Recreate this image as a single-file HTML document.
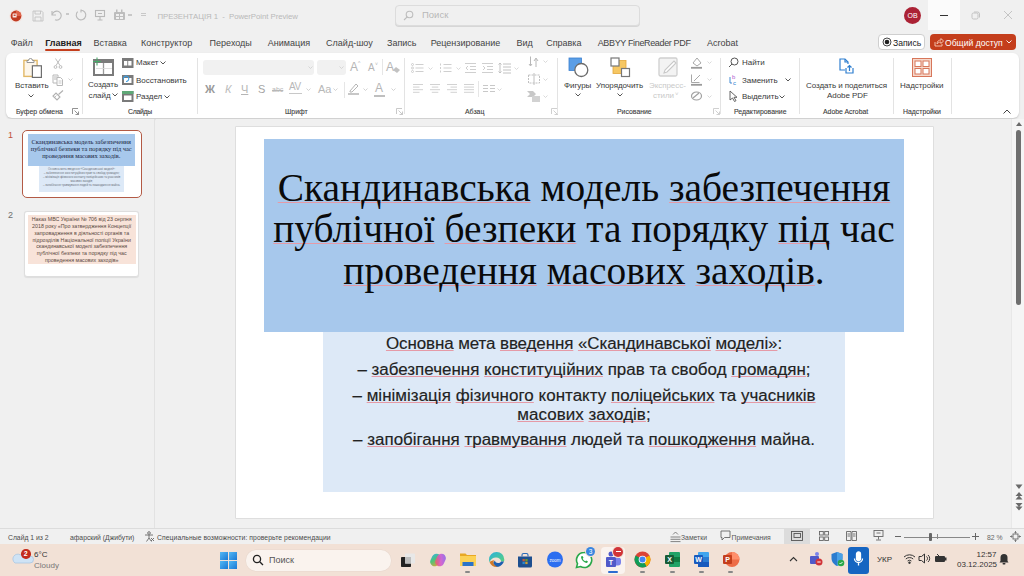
<!DOCTYPE html>
<html><head><meta charset="utf-8">
<style>
*{margin:0;padding:0;box-sizing:border-box}
html,body{width:1024px;height:576px;overflow:hidden;background:#f0f0f0;font-family:"Liberation Sans",sans-serif;color:#333}
.a{position:absolute;white-space:nowrap}
#titlebar{position:absolute;left:0;top:0;width:1024px;height:31px;background:#f0f0f0}
#ribbon{position:absolute;left:5.5px;top:52.5px;width:1013px;height:65.3px;background:#fff;border-radius:6px;box-shadow:0 1px 2px rgba(0,0,0,.18)}
#panel{position:absolute;left:0;top:119px;width:155px;height:409px;background:#f0f0f0;border-right:1px solid #e2e2e2}
#canvas{position:absolute;left:156px;top:119px;width:856px;height:409px;background:#f0f0f0}
#slide{position:absolute;left:236px;top:126.5px;width:697px;height:391.7px;background:#fff;box-shadow:0 0 0 0.6px rgba(0,0,0,.13)}
#tbox{position:absolute;left:264px;top:139px;width:640px;height:193px;background:#a7c8ec}
#bbox{position:absolute;left:323px;top:332px;width:522px;height:160px;background:#dde9f7}
#status{position:absolute;left:0;top:528px;width:1024px;height:16px;background:#f0f0f0;border-top:1px solid #dcdcdc}
#taskbar{position:absolute;left:0;top:544px;width:1024px;height:32px;background:#f2e1d6}
.title .sp{text-underline-offset:0.5px;text-decoration-skip-ink:none}
.title{font-family:"Liberation Serif",serif;font-size:39.4px;color:#0a0a0a;text-align:center;position:absolute;left:264px;width:640px;line-height:41.75px}
.body{font-size:16px;transform:scaleX(1.06);color:#222;-webkit-text-stroke:0.15px #222;text-align:center;position:absolute;left:323px;width:522px}
.sp{text-decoration:underline;text-decoration-skip-ink:none;text-decoration-color:#e59aa6;text-underline-offset:1px;text-decoration-thickness:1px}
.tab{position:absolute;top:37.8px;font-size:9px;color:#444;white-space:nowrap}
.rl{position:absolute;font-size:8px;letter-spacing:-0.05px;color:#3a3a3a;white-space:nowrap}
.gl{position:absolute;top:108px;font-size:6.9px;color:#3a3a3a;-webkit-text-stroke:0.1px #3a3a3a;white-space:nowrap}
.sep{position:absolute;top:58px;width:1px;height:56px;background:#e3e3e3}
</style></head><body>
<div id="titlebar">
<svg class="a" style="left:9px;top:9px" width="14" height="14" viewBox="0 0 14 14"><circle cx="7" cy="7" r="6.6" fill="#f6dcd4" opacity=".6"/><circle cx="7" cy="7" r="5.4" fill="#c13b22"/><path d="M7 1.6A5.4 5.4 0 0 1 12.4 7H7z" fill="#e0644a"/><rect x="3.6" y="4.6" width="4" height="4" rx="0.5" fill="#fff" opacity=".9"/><rect x="4.6" y="5.6" width="2" height="1.3" fill="#c13b22"/></svg>
<svg class="a" style="left:32px;top:9.5px" width="12" height="12" viewBox="0 0 12 12" fill="none" stroke="#c2c2c2" stroke-width="0.9"><path d="M1 1h8.5L11 2.5V11H1z"/><path d="M3 1v3h5.5V1M3 11V7h6v4"/></svg>
<svg class="a" style="left:50px;top:9px" width="12" height="12" viewBox="0 0 12 12" fill="none" stroke="#b9b9b9" stroke-width="1.1"><path d="M2 2v4h4"/><path d="M2.3 5.5A4.5 4.5 0 1 1 5 10.8"/></svg>
<div class="a" style="left:66px;top:13px;width:3px;height:2px;background:#c8c8c8"></div>
<svg class="a" style="left:75px;top:9px" width="12" height="12" viewBox="0 0 12 12" fill="none" stroke="#b9b9b9" stroke-width="1.1"><path d="M6 1.2A4.8 4.8 0 1 1 2.6 2.6"/><path d="M6 0.5v3"/></svg>
<svg class="a" style="left:94px;top:9px" width="12" height="12" viewBox="0 0 12 12" fill="none" stroke="#b9b9b9" stroke-width="1.1"><rect x="1.5" y="1.5" width="9" height="6"/><path d="M6 7.5v3M3.5 11h5M4 4.5h4"/></svg>
<svg class="a" style="left:113px;top:9px" width="13" height="12" viewBox="0 0 13 12" fill="#bdbdbd"><rect x="1" y="3" width="11" height="8" rx="1"/><rect x="3" y="0.5" width="1.5" height="3"/><rect x="8" y="0.5" width="1.5" height="3"/><rect x="3" y="5" width="3" height="2" fill="#f0f0f0"/><rect x="7" y="5" width="3" height="2" fill="#f0f0f0"/><rect x="3" y="8" width="3" height="2" fill="#f0f0f0"/><rect x="7" y="8" width="3" height="2" fill="#f0f0f0"/></svg>
<div class="a" style="left:128px;top:14px;width:4px;height:2px;background:#c8c8c8"></div>
<div class="a" style="left:141px;top:13px;width:5px;height:1px;background:#c8c8c8;box-shadow:0 2px 0 #c8c8c8"></div>
<div class="a" style="left:157.5px;top:12px;font-size:7.8px;color:#b9b9b9;letter-spacing:-0.05px">ПРЕЗЕНТАЦІЯ 1 &nbsp;-&nbsp; PowerPoint Preview</div>
<div class="a" style="left:395px;top:5px;width:245px;height:21px;border:1px solid #dcdcdc;border-radius:4px;background:#f0f0f0;box-shadow:0 1px 0 #d6d6d6"></div>
<svg class="a" style="left:403px;top:10px" width="11" height="11" viewBox="0 0 11 11" fill="none" stroke="#bdbdbd" stroke-width="1.1"><circle cx="6.5" cy="4.5" r="3.3"/><path d="M4.2 6.8L1 10"/></svg>
<div class="a" style="left:422px;top:9.2px;font-size:9.5px;color:#b8b8b8">Поиск</div>
<div class="a" style="left:904px;top:7px;width:17px;height:17px;border-radius:50%;background:#ab2235;color:#fff;font-size:7px;text-align:center;line-height:17px">ОВ</div>
<div class="a" style="left:928px;top:0;width:32px;height:30px;background:#fbfbfb"></div>
<div class="a" style="left:940px;top:15px;width:8px;height:1px;background:#333"></div>
<svg class="a" style="left:971px;top:11px" width="9" height="9" viewBox="0 0 9 9" fill="none" stroke="#c4c4c4" stroke-width="1"><rect x="1" y="2" width="6" height="6" rx="1.5"/><path d="M3 1h3.5a2 2 0 0 1 2 2v3.5"/></svg>
<svg class="a" style="left:1003px;top:10px" width="10" height="10" viewBox="0 0 10 10" fill="none" stroke="#c4c4c4" stroke-width="1"><path d="M1 1l8 8M9 1l-8 8"/></svg>
</div>
<div class="tab" data-w="20.3" style="left:10.7px;">Файл</div>
<div class="tab" data-w="34.8" style="left:45.2px;font-weight:bold;color:#222">Главная</div>
<div class="tab" data-w="31.5" style="left:93.4px;">Вставка</div>
<div class="tab" data-w="52.4" style="left:141.0px;">Конструктор</div>
<div class="tab" data-w="41.7" style="left:209.6px;">Переходы</div>
<div class="tab" data-w="42.6" style="left:267.8px;">Анимация</div>
<div class="tab" data-w="46.9" style="left:326.1px;">Слайд-шоу</div>
<div class="tab" data-w="29.2" style="left:387.0px;">Запись</div>
<div class="tab" data-w="70.6" style="left:430.7px;">Рецензирование</div>
<div class="tab" data-w="15.2" style="left:516.5px;">Вид</div>
<div class="tab" data-w="34.5" style="left:546.2px;">Справка</div>
<div class="tab" data-w="92.1" style="left:597.7px;"><span style="letter-spacing:-0.35px">ABBYY FineReader PDF</span></div>
<div class="tab" data-w="31.1" style="left:706.9px;">Acrobat</div>
<div class="a" style="left:45px;top:48.6px;width:35px;height:2px;border-radius:1px;background:#c43e1c"></div>
<div class="a" style="left:878px;top:34px;width:47px;height:16px;border:1px solid #cfcfcf;border-radius:4px;background:#fff"></div>
<svg class="a" style="left:882px;top:37px" width="10" height="10" viewBox="0 0 10 10"><circle cx="5" cy="5" r="4" fill="none" stroke="#333" stroke-width="0.9"/><circle cx="5" cy="5" r="2.3" fill="#222"/></svg>
<div class="a" style="left:893px;top:37.5px;font-size:8.6px;color:#222">Запись</div>
<div class="a" style="left:930px;top:34px;width:86px;height:16px;border-radius:4px;background:#c43e1c"></div>
<svg class="a" style="left:934px;top:37px" width="10" height="10" viewBox="0 0 10 10" fill="none" stroke="#f7c9b8" stroke-width="0.9"><path d="M1 5v4h7V7"/><path d="M3 7c0-3 2-4 4-4V1.5L9.5 4 7 6.5V5C5 5 4 5.8 3 7z"/></svg>
<div class="a" style="left:945px;top:37.5px;font-size:8.6px;color:#fff">Общий доступ</div>
<svg class="a" style="left:1006px;top:40px" width="6" height="4" viewBox="0 0 6 4" fill="none" stroke="#fff" stroke-width="0.9"><path d="M0.5 0.5L3 3l2.5-2.5"/></svg>

<div id="ribbon"></div>
<!-- Clipboard -->
<svg class="a" style="left:22px;top:57px" width="21" height="22" viewBox="0 0 21 22" fill="none"><rect x="1.9" y="3.4" width="13.2" height="16" fill="#fdf6ea" stroke="#e2b866" stroke-width="1.4"/><path d="M5 5.5V3.5h1.5a2 2 0 0 1 4 0H12v2z" fill="#fff" stroke="#8a8a8a" stroke-width="0.9"/><rect x="10.4" y="8.8" width="9" height="11.6" fill="#fff" stroke="#6e6e6e" stroke-width="1.2"/></svg>
<div class="rl" style="left:15px;top:81px">Вставить</div>
<svg class="a" style="left:28px;top:94px" width="6" height="4" viewBox="0 0 6 4" fill="none" stroke="#555" stroke-width="1"><path d="M0.5 0.5L3 3l2.5-2.5"/></svg>
<svg class="a" style="left:53px;top:57.5px" width="10" height="11" viewBox="0 0 10 11" fill="none" stroke="#b5b5b5" stroke-width="0.9"><path d="M2.5 0.5l4.5 7M7.5 0.5L3 7.5"/><circle cx="2.5" cy="9" r="1.4"/><circle cx="7.5" cy="9" r="1.4"/></svg>
<svg class="a" style="left:52px;top:73.5px" width="12" height="12" viewBox="0 0 12 12" fill="none" stroke="#b8b8b8" stroke-width="1"><path d="M1 1h5v8H1z"/><path d="M2 3h3M2 5h3"/><path d="M5 3.5h3.5l2 2v6H5z" fill="#fff"/><path d="M6.5 7h3M6.5 9h3" stroke="#c8c8c8"/></svg>
<svg class="a" style="left:68px;top:78px" width="5" height="3" viewBox="0 0 5 3" fill="none" stroke="#c8c8c8" stroke-width="0.9"><path d="M0.5 0.5L2.5 2.5 4.5 0.5"/></svg>
<svg class="a" style="left:52px;top:90px" width="12" height="11" viewBox="0 0 12 11" fill="none" stroke="#b0b0b0" stroke-width="1.1"><path d="M1 6l4 4 3-3-4-4z"/><path d="M6.5 4.5L11 0.5"/><path d="M2.5 7.5l2-2" stroke-width="0.8"/></svg>
<div class="gl" style="left:16px">Буфер обмена</div>
<svg class="a" style="left:72px;top:108px" width="7" height="7" viewBox="0 0 7 7" fill="none" stroke="#777" stroke-width="0.8"><path d="M0.5 6V0.5H6"/><path d="M2.5 2.5l4 4M6.5 3.5v3h-3"/></svg>
<div class="sep" style="left:82px"></div>
<!-- Slides -->
<svg class="a" style="left:92px;top:57px" width="22" height="19" viewBox="0 0 22 19" fill="none"><rect x="2" y="3" width="19" height="15" fill="#fff" stroke="#7b7b7b" stroke-width="2"/><rect x="2" y="3" width="19" height="3" fill="#7b7b7b"/><path d="M11.5 6v11" stroke="#9a9a9a" stroke-width="1.3"/><path d="M4 11.5h16" stroke="#d8d8d8" stroke-width="0.8"/><path d="M5 0.5v8M1 4.5h8" stroke="#4aa86a" stroke-width="1.1"/></svg>
<div class="rl" style="left:88px;top:80px">Создать</div>
<div class="rl" style="left:88.5px;top:90.5px">слайд</div>
<svg class="a" style="left:111.5px;top:93px" width="6" height="4" viewBox="0 0 6 4" fill="none" stroke="#555" stroke-width="1"><path d="M0.5 0.5L3 3l2.5-2.5"/></svg>
<svg class="a" style="left:122px;top:57.5px" width="11.5" height="10" viewBox="0 0 11.5 10"><rect x="0" y="0" width="11.5" height="10" fill="#7a7a7a"/><rect x="2" y="3" width="3.3" height="4.5" fill="#fff"/><rect x="6.2" y="3" width="3.3" height="4.5" fill="#fff"/></svg>
<div class="rl" style="left:136px;top:57.5px">Макет</div>
<svg class="a" style="left:160px;top:61px" width="6" height="4" viewBox="0 0 6 4" fill="none" stroke="#555" stroke-width="1"><path d="M0.5 0.5L3 3l2.5-2.5"/></svg>
<svg class="a" style="left:122px;top:74.5px" width="11.5" height="10" viewBox="0 0 11.5 10"><rect x="0" y="0" width="11.5" height="10" fill="#7a7a7a"/><rect x="2" y="3" width="7.5" height="5" fill="#fff"/><path d="M1.5 4.5a2.7 2.7 0 1 1 2.5 2" fill="none" stroke="#3a9ce0" stroke-width="1.1"/></svg>
<div class="rl" style="left:136px;top:75.5px">Восстановить</div>
<svg class="a" style="left:122px;top:91px" width="11.5" height="11" viewBox="0 0 11.5 11"><rect x="0" y="0" width="11.5" height="11" fill="#7a7a7a"/><rect x="0" y="0" width="11.5" height="3" fill="#5fa877"/><rect x="2" y="4.5" width="7.5" height="4.5" fill="#fff"/></svg>
<div class="rl" style="left:136px;top:92px">Раздел</div>
<svg class="a" style="left:163.5px;top:95px" width="6" height="4" viewBox="0 0 6 4" fill="none" stroke="#555" stroke-width="1"><path d="M0.5 0.5L3 3l2.5-2.5"/></svg>
<div class="gl" style="left:128px;letter-spacing:-0.3px">Слайды</div>
<div class="sep" style="left:197px"></div>
<!-- Font -->
<div class="a" style="left:203px;top:60px;width:111px;height:15px;border-radius:3px;background:#f1f1f1"></div>
<div class="a" style="left:317px;top:60px;width:29px;height:15px;border-radius:3px;background:#f1f1f1"></div>
<svg class="a" style="left:308px;top:66px" width="5" height="3" viewBox="0 0 5 3" fill="none" stroke="#cfcfcf" stroke-width="0.8"><path d="M0.5 0.5L2.5 2.5 4.5 0.5"/></svg>
<svg class="a" style="left:339px;top:66px" width="5" height="3" viewBox="0 0 5 3" fill="none" stroke="#cfcfcf" stroke-width="0.8"><path d="M0.5 0.5L2.5 2.5 4.5 0.5"/></svg>
<div class="a" style="left:350px;top:60px;font-size:12px;color:#b5b5b5">A</div><div class="a" style="left:358px;top:60px;font-size:5px;color:#b5b5b5">^</div>
<div class="a" style="left:368px;top:62px;font-size:10px;color:#b5b5b5">A</div><div class="a" style="left:375px;top:61px;font-size:5px;color:#b5b5b5">˅</div>
<div class="a" style="left:382px;top:59px;width:1px;height:16px;background:#e6e6e6"></div>
<div class="a" style="left:386px;top:60px;font-size:12px;color:#b5b5b5">A</div><svg class="a" style="left:393px;top:67px" width="7" height="6" viewBox="0 0 7 6" fill="#c2c2c2"><path d="M3 0l4 3-3 3-4-3z"/></svg>
<div class="a" style="left:205px;top:83px;font-size:11px;font-weight:bold;color:#9a9a9a">Ж</div>
<div class="a" style="left:225px;top:83px;font-size:11px;font-style:italic;color:#bdbdbd">К</div>
<div class="a" style="left:241px;top:83px;font-size:11px;color:#b5b5b5;text-decoration:underline">Ч</div>
<div class="a" style="left:258px;top:83px;font-size:11px;color:#a5a5a5">S</div>
<div class="a" style="left:272px;top:86px;font-size:7px;color:#b8b8b8;text-decoration:line-through">abc</div>
<div class="a" style="left:289px;top:81px;font-size:10px;color:#b8b8b8;letter-spacing:-0.5px">AV</div><div class="a" style="left:289px;top:93px;width:13px;height:1px;background:#c8c8c8"></div>
<svg class="a" style="left:306px;top:88px" width="5" height="3" viewBox="0 0 5 3" fill="none" stroke="#c8c8c8" stroke-width="0.8"><path d="M0.5 0.5L2.5 2.5 4.5 0.5"/></svg>
<div class="a" style="left:318px;top:83px;font-size:11px;color:#b8b8b8">Aa</div>
<svg class="a" style="left:333px;top:88px" width="5" height="3" viewBox="0 0 5 3" fill="none" stroke="#c8c8c8" stroke-width="0.8"><path d="M0.5 0.5L2.5 2.5 4.5 0.5"/></svg>
<div class="a" style="left:344px;top:82px;width:1px;height:16px;background:#e6e6e6"></div>
<svg class="a" style="left:347px;top:82px" width="13" height="13" viewBox="0 0 13 13" fill="none" stroke="#b5b5b5" stroke-width="1"><path d="M3 9l6-7 2 2-6 6H3z"/><path d="M1 12h11" stroke-width="1.5"/></svg>
<svg class="a" style="left:363px;top:88px" width="5" height="3" viewBox="0 0 5 3" fill="none" stroke="#c8c8c8" stroke-width="0.8"><path d="M0.5 0.5L2.5 2.5 4.5 0.5"/></svg>
<div class="a" style="left:375px;top:81px;font-size:12px;color:#b5b5b5">A</div><div class="a" style="left:374px;top:95px;width:11px;height:1.5px;background:#bfbfbf"></div>
<svg class="a" style="left:391px;top:88px" width="5" height="3" viewBox="0 0 5 3" fill="none" stroke="#c8c8c8" stroke-width="0.8"><path d="M0.5 0.5L2.5 2.5 4.5 0.5"/></svg>
<div class="gl" style="left:285px">Шрифт</div>
<svg class="a" style="left:396px;top:108px" width="7" height="7" viewBox="0 0 7 7" fill="none" stroke="#bbb" stroke-width="0.8"><path d="M0.5 6V0.5H6"/><path d="M2.5 2.5l4 4M6.5 3.5v3h-3"/></svg>
<div class="sep" style="left:404px"></div>
<svg class="a" style="left:411px;top:63px" width="13" height="10" viewBox="0 0 13 10" fill="none" stroke="#cacaca" stroke-width="0.9"><circle cx="1.5" cy="1.5" r="1"/><circle cx="1.5" cy="5" r="1"/><circle cx="1.5" cy="8.5" r="1"/><path d="M4.5 1.5h8M4.5 5h8M4.5 8.5h8"/></svg>
<svg class="a" style="left:428px;top:67px" width="5" height="3" viewBox="0 0 5 3" fill="none" stroke="#d0d0d0" stroke-width="0.8"><path d="M0.5 0.5L2.5 2.5 4.5 0.5"/></svg>
<svg class="a" style="left:439px;top:63px" width="13" height="10" viewBox="0 0 13 10" fill="none" stroke="#cacaca" stroke-width="0.9"><path d="M1.5 0.5v2M1.5 4v2M1.5 7.5v2M4.5 1.5h8M4.5 5h8M4.5 8.5h8"/></svg>
<svg class="a" style="left:456px;top:67px" width="5" height="3" viewBox="0 0 5 3" fill="none" stroke="#d0d0d0" stroke-width="0.8"><path d="M0.5 0.5L2.5 2.5 4.5 0.5"/></svg>
<svg class="a" style="left:465px;top:63px" width="12" height="10" viewBox="0 0 12 10" fill="none" stroke="#cacaca" stroke-width="0.9"><path d="M0 0.5h11M5 3.5h6M5 6.5h6M0 9.5h11M3 3l-2 2 2 2"/></svg>
<svg class="a" style="left:482px;top:63px" width="12" height="10" viewBox="0 0 12 10" fill="none" stroke="#cacaca" stroke-width="0.9"><path d="M0 0.5h11M5 3.5h6M5 6.5h6M0 9.5h11M1 3l2 2-2 2"/></svg>
<svg class="a" style="left:498px;top:62px" width="13" height="12" viewBox="0 0 13 12" fill="none" stroke="#c2c2c2" stroke-width="1"><path d="M2 1v10M0.5 2.5L2 1l1.5 1.5M0.5 9.5L2 11l1.5-1.5M5 2h8M5 5h8M5 8h8M5 11h8"/></svg>
<svg class="a" style="left:514px;top:67px" width="5" height="3" viewBox="0 0 5 3" fill="none" stroke="#d0d0d0" stroke-width="0.8"><path d="M0.5 0.5L2.5 2.5 4.5 0.5"/></svg>
<svg class="a" style="left:413.0px;top:84px" width="10" height="9" viewBox="0 0 10 9" fill="none" stroke="#cdcdcd" stroke-width="0.9"><path d="M0.0 0.5h10.0"/><path d="M0.0 3.1h6.5"/><path d="M0.0 5.7h10.0"/><path d="M0.0 8.3h6.5"/></svg>
<svg class="a" style="left:430.0px;top:84px" width="10" height="9" viewBox="0 0 10 9" fill="none" stroke="#cdcdcd" stroke-width="0.9"><path d="M0.0 0.5h10.0"/><path d="M1.8 3.1h6.5"/><path d="M0.0 5.7h10.0"/><path d="M1.8 8.3h6.5"/></svg>
<svg class="a" style="left:447.0px;top:84px" width="10" height="9" viewBox="0 0 10 9" fill="none" stroke="#cdcdcd" stroke-width="0.9"><path d="M0.0 0.5h10.0"/><path d="M3.5 3.1h6.5"/><path d="M0.0 5.7h10.0"/><path d="M3.5 8.3h6.5"/></svg>
<svg class="a" style="left:464.0px;top:84px" width="10" height="9" viewBox="0 0 10 9" fill="none" stroke="#cdcdcd" stroke-width="0.9"><path d="M0.0 0.5h10.0"/><path d="M0.0 3.1h10.0"/><path d="M0.0 5.7h10.0"/><path d="M0.0 8.3h10.0"/></svg>
<div class="a" style="left:478px;top:81px;width:1px;height:16px;background:#e6e6e6"></div>
<svg class="a" style="left:483px;top:85px" width="12" height="8" viewBox="0 0 12 8" fill="none" stroke="#c8c8c8" stroke-width="1"><path d="M0 0.5h5M7 0.5h5M0 3.5h5M7 3.5h5M0 6.5h5M7 6.5h5"/></svg>
<svg class="a" style="left:497px;top:88px" width="5" height="3" viewBox="0 0 5 3" fill="none" stroke="#d0d0d0" stroke-width="0.8"><path d="M0.5 0.5L2.5 2.5 4.5 0.5"/></svg>
<svg class="a" style="left:528px;top:56px" width="12" height="12" viewBox="0 0 12 12" fill="none" stroke="#b8b8b8" stroke-width="1"><path d="M2.5 0.5v9M1 8l1.5 2L4 8M8 11V3M6 5l2-3 2 3"/></svg>
<svg class="a" style="left:543px;top:60px" width="5" height="3" viewBox="0 0 5 3" fill="none" stroke="#d0d0d0" stroke-width="0.8"><path d="M0.5 0.5L2.5 2.5 4.5 0.5"/></svg>
<svg class="a" style="left:528px;top:73px" width="12" height="12" viewBox="0 0 12 12" fill="none" stroke="#c0c0c0" stroke-width="1" stroke-dasharray="2 1"><rect x="0.5" y="2" width="11" height="8"/><path d="M6 0v12" stroke-dasharray="none"/></svg>
<svg class="a" style="left:543px;top:78px" width="5" height="3" viewBox="0 0 5 3" fill="none" stroke="#d0d0d0" stroke-width="0.8"><path d="M0.5 0.5L2.5 2.5 4.5 0.5"/></svg>
<svg class="a" style="left:527px;top:90px" width="13" height="12" viewBox="0 0 13 12" fill="#c8c8c8"><path d="M0 1h6l3 3-3 3H0l3-3z"/><rect x="5" y="6" width="8" height="6" fill="#d2d2d2"/></svg>
<svg class="a" style="left:543px;top:95px" width="5" height="3" viewBox="0 0 5 3" fill="none" stroke="#d0d0d0" stroke-width="0.8"><path d="M0.5 0.5L2.5 2.5 4.5 0.5"/></svg>
<div class="gl" style="left:465px">Абзац</div>
<svg class="a" style="left:551px;top:108px" width="7" height="7" viewBox="0 0 7 7" fill="none" stroke="#c4c4c4" stroke-width="0.8"><path d="M0.5 6V0.5H6"/><path d="M2.5 2.5l4 4M6.5 3.5v3h-3"/></svg>
<div class="sep" style="left:557px"></div>
<svg class="a" style="left:568px;top:57px" width="21" height="21" viewBox="0 0 21 21"><rect x="1" y="1" width="12.5" height="12.5" fill="#5b9ee6" stroke="#3a7fd0" stroke-width="0.8"/><circle cx="13.3" cy="13" r="6.5" fill="#fff" stroke="#6a6a6a" stroke-width="1.3"/></svg>
<div class="rl" style="left:564px;top:81px">Фигуры</div>
<svg class="a" style="left:575px;top:93px" width="6" height="4" viewBox="0 0 6 4" fill="none" stroke="#555" stroke-width="1"><path d="M0.5 0.5L3 3l2.5-2.5"/></svg>
<svg class="a" style="left:610px;top:57px" width="21" height="21" viewBox="0 0 21 21"><rect x="3" y="3.5" width="13" height="13" fill="#f6c763" stroke="#e3a63a" stroke-width="0.8"/><rect x="1" y="1" width="8" height="8" fill="#fff" stroke="#777" stroke-width="1.2"/><rect x="11.5" y="11.5" width="8" height="8" fill="#fff" stroke="#777" stroke-width="1.2"/></svg>
<div class="rl" style="left:596px;top:81px">Упорядочить</div>
<svg class="a" style="left:617px;top:93px" width="6" height="4" viewBox="0 0 6 4" fill="none" stroke="#555" stroke-width="1"><path d="M0.5 0.5L3 3l2.5-2.5"/></svg>
<svg class="a" style="left:658px;top:57px" width="21" height="21" viewBox="0 0 21 21" fill="none"><rect x="1" y="1" width="18" height="18" rx="1.5" fill="#f3f3f3" stroke="#cfcfcf" stroke-width="1.3"/><path d="M6 16l3-1 9-9-2-2-9 9z" fill="#fff" stroke="#c8c8c8" stroke-width="1.1"/></svg>
<div class="rl" style="left:649px;top:81px;color:#c9c9c9">Экспресс-</div>
<div class="rl" style="left:653px;top:91px;color:#c9c9c9">стили</div>
<div class="a" style="left:675px;top:91px;font-size:6px;color:#c9c9c9">˅</div>
<svg class="a" style="left:690px;top:56px" width="13" height="13" viewBox="0 0 13 13" fill="none" stroke="#a8a8a8" stroke-width="1"><path d="M3 7l4-5 4 5-4 3z"/><path d="M1 11.8h11" stroke="#9a9a9a" stroke-width="1.8"/></svg>
<svg class="a" style="left:707px;top:61px" width="5" height="3" viewBox="0 0 5 3" fill="none" stroke="#d0d0d0" stroke-width="0.8"><path d="M0.5 0.5L2.5 2.5 4.5 0.5"/></svg>
<svg class="a" style="left:690px;top:73px" width="13" height="13" viewBox="0 0 13 13" fill="none" stroke="#a8a8a8" stroke-width="1"><path d="M1.5 1.5v8h8"/><path d="M4 8l6-6" /><path d="M1 11.8h11" stroke="#9a9a9a" stroke-width="1.8"/></svg>
<svg class="a" style="left:707px;top:78px" width="5" height="3" viewBox="0 0 5 3" fill="none" stroke="#d0d0d0" stroke-width="0.8"><path d="M0.5 0.5L2.5 2.5 4.5 0.5"/></svg>
<svg class="a" style="left:690px;top:90px" width="13" height="12" viewBox="0 0 13 12" fill="none" stroke="#a0a0a0" stroke-width="1.2"><ellipse cx="6.5" cy="6" rx="5" ry="4"/><path d="M3 8l6-5"/></svg>
<svg class="a" style="left:707px;top:95px" width="5" height="3" viewBox="0 0 5 3" fill="none" stroke="#d0d0d0" stroke-width="0.8"><path d="M0.5 0.5L2.5 2.5 4.5 0.5"/></svg>
<div class="gl" style="left:617px">Рисование</div>
<svg class="a" style="left:713px;top:108px" width="7" height="7" viewBox="0 0 7 7" fill="none" stroke="#c4c4c4" stroke-width="0.8"><path d="M0.5 6V0.5H6"/><path d="M2.5 2.5l4 4M6.5 3.5v3h-3"/></svg>
<div class="sep" style="left:720px"></div>
<!-- Editing -->
<svg class="a" style="left:728px;top:57px" width="11" height="11" viewBox="0 0 11 11" fill="none" stroke="#555" stroke-width="1"><circle cx="6.5" cy="4.5" r="3.5"/><path d="M4 7l-3 3"/></svg>
<div class="rl" style="left:742px;top:58px">Найти</div>
<svg class="a" style="left:728px;top:74px" width="11" height="12" viewBox="0 0 11 12"><text x="4" y="5" font-size="6" fill="#b05bd0" font-family="Liberation Sans">b</text><text x="5" y="11" font-size="6" fill="#2f7fd0" font-family="Liberation Sans">c</text><path d="M2 3v6h2" fill="none" stroke="#2f7fd0" stroke-width="0.9"/></svg>
<div class="rl" style="left:742px;top:75.5px">Заменить</div>
<svg class="a" style="left:785px;top:78px" width="6" height="4" viewBox="0 0 6 4" fill="none" stroke="#555" stroke-width="1"><path d="M0.5 0.5L3 3l2.5-2.5"/></svg>
<svg class="a" style="left:729px;top:90px" width="10" height="12" viewBox="0 0 10 12" fill="none" stroke="#555" stroke-width="0.9"><path d="M1 1v9l2.5-2 2 3.5 1.5-.8-2-3.4H8z"/></svg>
<div class="rl" style="left:742px;top:92px">Выделить</div>
<svg class="a" style="left:779px;top:95px" width="6" height="4" viewBox="0 0 6 4" fill="none" stroke="#555" stroke-width="1"><path d="M0.5 0.5L3 3l2.5-2.5"/></svg>
<div class="gl" style="left:734px">Редактирование</div>
<div class="sep" style="left:799px"></div>
<!-- Adobe -->
<svg class="a" style="left:838px;top:58px" width="16" height="17" viewBox="0 0 16 17" fill="none" stroke="#2f7fd0" stroke-width="1.2"><path d="M7 12H2V1h5l3 3v2"/><path d="M7 1v3h3"/><path d="M8 10v5h7v-5"/><path d="M11.5 13V7.5M9.5 9.5l2-2 2 2"/></svg>
<div class="rl" style="left:806px;top:81px">Создать и поделиться</div>
<div class="rl" style="left:827px;top:91px">Adobe PDF</div>
<div class="gl" style="left:823px">Adobe Acrobat</div>
<div class="sep" style="left:893px"></div>
<svg class="a" style="left:912px;top:58px" width="20" height="19" viewBox="0 0 20 19"><rect x="0.5" y="0.5" width="19" height="18" fill="#f6d9cc" stroke="#d7765a" stroke-width="1"/><rect x="3" y="3" width="6" height="5.5" fill="#fff" stroke="#d7765a" stroke-width="1"/><rect x="11" y="3" width="6" height="5.5" fill="#fff" stroke="#d7765a" stroke-width="1"/><rect x="3" y="10.5" width="6" height="5.5" fill="#fff" stroke="#d7765a" stroke-width="1"/><rect x="11" y="10.5" width="6" height="5.5" fill="#fff" stroke="#d7765a" stroke-width="1"/></svg>
<div class="rl" style="left:900px;top:81px">Надстройки</div>
<div class="gl" style="left:903px">Надстройки</div>
<div class="sep" style="left:951px"></div>
<svg class="a" style="left:1003px;top:109px" width="8" height="5" viewBox="0 0 8 5" fill="none" stroke="#444" stroke-width="1"><path d="M0.5 4.5L4 1l3.5 3.5"/></svg>

<div id="panel"></div>
<div class="a" style="left:8px;top:129.8px;font-size:9px;color:#c0503a">1</div>
<div class="a" style="left:22.2px;top:129.7px;width:119.4px;height:68.8px;border:1.7px solid #b35a45;border-radius:5px;background:#fff"></div>
<div class="a" style="left:28px;top:134px;width:106.5px;height:31.5px;background:#a7c8ec"></div>
<div class="a" style="left:38.8px;top:165.5px;width:85.7px;height:26.5px;background:#dde9f7"></div>
<div class="a" style="left:28px;top:138px;width:106.5px;font-family:'Liberation Serif',serif;font-size:6.4px;line-height:7px;text-align:center;color:#1a2540">Скандинавська модель забезпечення<br>публічної безпеки та порядку під час<br>проведення масових заходів.</div>
<div class="a" style="left:38.8px;top:166.6px;width:85.7px;font-size:2.85px;line-height:4px;text-align:center;color:#6a707a">Основна мета введення «Скандинавської моделі»:<br>– забезпечення конституційних прав та свобод громадян;<br>– мінімізація фізичного контакту поліцейських та учасників<br>масових заходів;<br>– запобігання травмування людей та пошкодження майна.</div>
<div class="a" style="left:8px;top:209.5px;font-size:9px;color:#6e6e6e">2</div>
<div class="a" style="left:23.5px;top:211px;width:115.5px;height:65.5px;border:1px solid #dedede;border-radius:3px;background:#fff;box-shadow:0 0.5px 1px rgba(0,0,0,.08)"></div>
<div class="a" style="left:27.8px;top:215.3px;width:107.8px;height:49px;background:#f8e3d9"></div>
<div class="a" style="left:27.8px;top:216.2px;width:107.8px;font-size:5.3px;line-height:6.8px;text-align:center;color:#5a4a42">Наказ МВС України № 706 від 23 серпня<br>2018 року «Про затвердження Концепції<br>запровадження в діяльності органів та<br>підрозділів Національної поліції України<br>скандинавської моделі забезпечення<br>публічної безпеки та порядку під час<br>проведення масових заходів»</div>

<div id="canvas"></div>
<div class="a" style="left:1011px;top:119px;width:13px;height:409px;background:#f5f5f5;border-left:1px solid #e8e8e8"></div><div class="a" style="left:1015.5px;top:129.5px;width:5.8px;height:175px;border-radius:3px;background:#6f6f6f"></div>
<svg class="a" style="left:1014.5px;top:121px" width="8" height="6" viewBox="0 0 8 6" fill="#6a6a6a"><path d="M4 1L7 5H1z"/></svg>

<svg class="a" style="left:1014.5px;top:483px" width="8" height="32" viewBox="0 0 8 32" fill="#6a6a6a"><path d="M0.5 1.5h7L4 6z"/><path d="M4 9l3.5 4h-7zM4 12.5l3.5 4h-7z"/><path d="M0.5 20h7L4 24zM0.5 23.5h7L4 27.5z"/></svg>

<div id="slide"></div>
<div id="tbox"></div>
<div id="bbox"></div>
<div class="title" style="top:167.5px"><span class="sp">Скандинавська</span> модель <span class="sp">забезпечення</span><br><span class="sp">публічної</span> <span class="sp">безпеки</span> та порядку <span class="sp">під</span> час<br><span class="sp">проведення</span> <span class="sp">масових</span> <span class="sp">заходів</span>.</div>
<div class="body" style="top:334.3px;line-height:19.5px">
<div style="letter-spacing:-0.09px"><span class="sp">Основна</span> мета <span class="sp">введення</span> <span class="sp">«Скандинавської</span> <span class="sp">моделі»</span>:</div>
<div style="margin-top:6.3px">– <span class="sp">забезпечення</span> <span class="sp">конституційних</span> прав та свобод <span class="sp">громадян</span>;</div>
<div style="margin-top:6.3px;letter-spacing:0.03px">– <span class="sp">мінімізація</span> <span class="sp">фізичного</span> контакту <span class="sp">поліцейських</span> та <span class="sp">учасників</span><br><span class="sp">масових</span> <span class="sp">заходів</span>;</div>
<div style="margin-top:5.5px">– <span class="sp">запобігання</span> <span class="sp">травмування</span> людей та <span class="sp">пошкодження</span> майна.</div>
</div>
<div id="status"></div>
<div class="a" style="left:8px;top:533.6px;font-size:6.8px;color:#4a4a4a">Слайд 1 из 2</div>
<div class="a" style="left:70px;top:533.6px;font-size:6.8px;color:#4a4a4a">афарский (Джибути)</div>
<svg class="a" style="left:144px;top:531px" width="11" height="11" viewBox="0 0 11 11" fill="none" stroke="#666" stroke-width="0.9"><circle cx="5" cy="2" r="1.3"/><path d="M1 4h8M5 4v3l-2.5 3.5M5 7l2.5 3.5"/><path d="M7 7l3 3M10 7l-3 3"/></svg>
<div class="a" style="left:157px;top:533.6px;font-size:6.8px;color:#4a4a4a;letter-spacing:0.07px">Специальные возможности: проверьте рекомендации</div>
<svg class="a" style="left:670px;top:531px" width="11" height="12" viewBox="0 0 11 12" fill="none" stroke="#666" stroke-width="0.8"><path d="M3 3.5L5.5 1 8 3.5"/><path d="M0.5 6h10M0.5 8.3h10M0.5 10.6h10"/></svg>
<div class="a" style="left:681px;top:533.6px;font-size:6.8px;color:#555">Заметки</div>
<svg class="a" style="left:720px;top:530px" width="11" height="11" viewBox="0 0 11 11" fill="none" stroke="#666" stroke-width="0.9"><path d="M1 1h9v6.5H4.5L2 10V7.5H1z"/></svg>
<div class="a" style="left:731.5px;top:533.6px;font-size:6.8px;color:#555">Примечания</div>
<div class="a" style="left:784px;top:529px;width:26px;height:15px;background:#dcdcdc"></div>
<svg class="a" style="left:791px;top:531px" width="12" height="10" viewBox="0 0 12 10" fill="none" stroke="#555" stroke-width="0.9"><rect x="0.5" y="0.5" width="11" height="9"/><rect x="3" y="2.5" width="6.5" height="4"/></svg>
<svg class="a" style="left:819px;top:531px" width="10" height="10" viewBox="0 0 10 10" fill="none" stroke="#666" stroke-width="0.9"><rect x="0.5" y="0.5" width="3.8" height="3.5"/><rect x="5.7" y="0.5" width="3.8" height="3.5"/><rect x="0.5" y="6" width="3.8" height="3.5"/><rect x="5.7" y="6" width="3.8" height="3.5"/></svg>
<svg class="a" style="left:846px;top:531px" width="11" height="10" viewBox="0 0 11 10" fill="none" stroke="#666" stroke-width="0.9"><path d="M0.5 0.5h4.5v9H0.5zM6 0.5h4.5v9H6z"/><path d="M1.5 3h2.5M1.5 5h2.5M7 3h2.5M7 5h2.5"/></svg>
<svg class="a" style="left:873px;top:530px" width="11" height="11" viewBox="0 0 11 11" fill="none" stroke="#666" stroke-width="0.9"><rect x="1" y="0.5" width="9" height="6"/><path d="M5.5 6.5v3M3 10h5M3.5 3h4"/></svg>
<div class="a" style="left:895px;top:536px;width:6px;height:1px;background:#666"></div>
<div class="a" style="left:904px;top:536.5px;width:66px;height:1px;background:#888"></div>
<div class="a" style="left:929px;top:533px;width:3px;height:8px;border-radius:1px;background:#666"></div>
<div class="a" style="left:936.5px;top:534px;width:1px;height:5px;background:#888"></div>
<div class="a" style="left:972px;top:536px;width:7px;height:1px;background:#666"></div><div class="a" style="left:975px;top:533px;width:1px;height:7px;background:#666"></div>
<div class="a" style="left:987px;top:533.6px;font-size:6.8px;color:#666">82 %</div>
<svg class="a" style="left:1010px;top:531px" width="11" height="11" viewBox="0 0 11 11" fill="none" stroke="#666" stroke-width="0.9"><rect x="3" y="3" width="5" height="5"/><path d="M5.5 0.5v2M5.5 8.5v2M0.5 5.5h2M8.5 5.5h2M4.5 1.5l1-1 1 1M4.5 9.5l1 1 1-1M1.5 4.5l-1 1 1 1M9.5 4.5l1 1-1 1"/></svg>

<div id="taskbar"></div>
<svg class="a" style="left:12px;top:549px" width="22" height="16" viewBox="0 0 22 16"><path d="M3 14h15a3.5 3.5 0 0 0 0-7 5 5 0 0 0-9.5-1A4 4 0 0 0 3 14z" fill="#cfe3f5" stroke="#a9c6e2" stroke-width="0.8"/></svg>
<div class="a" style="left:21px;top:549px;width:9.5px;height:9.5px;border-radius:50%;background:#c42b1c;color:#fff;font-size:7px;font-weight:bold;text-align:center;line-height:9.5px">2</div>
<div class="a" style="left:34px;top:550px;font-size:8px;color:#333">6°C</div>
<div class="a" style="left:34px;top:560.5px;font-size:8px;color:#777">Cloudy</div>
<svg class="a" style="left:220px;top:552px" width="17" height="17" viewBox="0 0 17 17"><defs><linearGradient id="wg" x1="0" y1="0" x2="1" y2="1"><stop offset="0" stop-color="#52b8f5"/><stop offset="1" stop-color="#1a78d4"/></linearGradient></defs><rect x="0" y="0" width="8" height="8" fill="url(#wg)"/><rect x="9" y="0" width="8" height="8" fill="url(#wg)"/><rect x="0" y="9" width="8" height="8" fill="url(#wg)"/><rect x="9" y="9" width="8" height="8" fill="url(#wg)"/></svg>
<div class="a" style="left:246px;top:550px;width:145px;height:20.5px;border-radius:10px;background:#faf3ee;box-shadow:0 0 0 0.5px #e8d8ce"></div>
<svg class="a" style="left:252px;top:554px" width="12" height="12" viewBox="0 0 12 12" fill="none" stroke="#222" stroke-width="1.3"><circle cx="5" cy="5" r="3.6"/><path d="M7.7 7.7L11 11"/></svg>
<div class="a" style="left:269px;top:555px;font-size:9px;color:#555">Поиск</div>
<svg class="a" style="left:400px;top:551.5px" width="16" height="16" viewBox="0 0 16 16"><rect x="1" y="5" width="10" height="10" rx="0.8" fill="#222"/><rect x="5" y="1.5" width="10" height="10" rx="0.8" fill="#e8e8e8"/><rect x="5" y="5" width="6" height="6.5" fill="#bdbdbd"/></svg>
<svg class="a" style="left:430px;top:551.5px" width="16" height="16" viewBox="0 0 16 16"><defs><linearGradient id="cpa" x1="0" y1="0" x2="1" y2="1"><stop offset="0" stop-color="#3bb0e8"/><stop offset=".45" stop-color="#4cc47a"/><stop offset="1" stop-color="#f0a030"/></linearGradient><linearGradient id="cpb" x1="1" y1="0" x2="0" y2="1"><stop offset="0" stop-color="#7a6cf0"/><stop offset=".5" stop-color="#d35cd0"/><stop offset="1" stop-color="#f0604a"/></linearGradient></defs><rect x="1" y="1.5" width="9" height="13" rx="4.5" transform="rotate(25 5.5 8)" fill="url(#cpa)"/><rect x="6" y="1.5" width="9" height="13" rx="4.5" transform="rotate(25 10.5 8)" fill="url(#cpb)" opacity=".92"/></svg>
<svg class="a" style="left:458.5px;top:552px" width="18" height="15" viewBox="0 0 18 15"><path d="M1 1.5h5.5l1.5 1.5H17v11H1z" fill="#e8a824"/><rect x="1" y="4" width="16" height="10" fill="#fcd155"/><rect x="3.5" y="10" width="11" height="4" fill="#2a73c9"/></svg>
<div class="a" style="left:465px;top:571px;width:5px;height:1.5px;border-radius:1px;background:#888"></div>
<svg class="a" style="left:487.5px;top:551px" width="17" height="17" viewBox="0 0 17 17"><defs><linearGradient id="edg" x1="0" y1="0" x2="1" y2="1"><stop offset="0" stop-color="#2bb0e0"/><stop offset="1" stop-color="#5ad27a"/></linearGradient></defs><path d="M8.5 1A7.5 7.5 0 0 0 1 8.5c0 1 .2 2 .6 2.8C2.5 8 5 6.5 8 6.5c3 0 5 2 5.2 4H16c.2-.6.3-1.3.3-2A7.5 7.5 0 0 0 8.5 1z" fill="url(#edg)"/><path d="M1.6 11.3A7.5 7.5 0 0 0 8.5 16c1 0 1.5-.1 2-.3-3-.5-5-2.5-5-4.5 0-.8.3-1.5.8-2C4 9.5 2.3 10.2 1.6 11.3z" fill="#d07a2a"/><path d="M5.5 11.2c0 2.5 2.5 4.5 5 4.5 2.5-.8 4.5-2.8 5.5-5.2H13c-.5 1-1.8 1.5-3 1.5-2 0-3-1-3-2.5z" fill="#1d5fb0"/></svg>
<svg class="a" style="left:517px;top:551.5px" width="16" height="16" viewBox="0 0 16 16"><path d="M1 4.5h14V14a1.5 1.5 0 0 1-1.5 1.5h-11A1.5 1.5 0 0 1 1 14z" fill="#1e4f8f"/><path d="M5 4.5V3a1.5 1.5 0 0 1 1.5-1.5h3A1.5 1.5 0 0 1 11 3v1.5" fill="none" stroke="#2c6bb8" stroke-width="1.1"/><rect x="5.5" y="7" width="2.3" height="2.3" fill="#c8583a"/><rect x="8.3" y="7" width="2.3" height="2.3" fill="#6a9a30"/><rect x="5.5" y="9.8" width="2.3" height="2.3" fill="#2a8ad0"/><rect x="8.3" y="9.8" width="2.3" height="2.3" fill="#d0a030"/></svg>
<svg class="a" style="left:546px;top:551px" width="18" height="17" viewBox="0 0 18 17"><circle cx="9" cy="8.5" r="8" fill="#2d6ef0"/><text x="9" y="10.5" font-size="4.5" fill="#fff" text-anchor="middle" font-family="Liberation Sans">zoom</text></svg>
<svg class="a" style="left:575px;top:551px" width="18" height="18" viewBox="0 0 18 18"><path d="M9 1.5a7.5 7.5 0 0 0-6.5 11.2L1.5 16.5l4-1A7.5 7.5 0 1 0 9 1.5z" fill="#fff" stroke="#2aa84a" stroke-width="1.6"/><path d="M6 5.5c0 3 2.5 6 6 6.5l1-1.5-1.8-1-1 .8c-1-.5-2-1.5-2.5-2.5l.8-1-1-1.8z" fill="#2aa84a"/></svg>
<div class="a" style="left:586px;top:547px;width:9px;height:9px;border-radius:50%;background:#3a86e0;color:#fff;font-size:6.5px;text-align:center;line-height:9px;box-shadow:0 0 0 1px #f2e1d6">3</div>
<div class="a" style="left:601px;top:547px;width:23.5px;height:26.5px;border-radius:4px;background:#faf3ef"></div>
<svg class="a" style="left:604px;top:551px" width="18" height="17" viewBox="0 0 18 17"><circle cx="12.5" cy="3.5" r="2.3" fill="#7b83eb"/><rect x="9" y="6.5" width="8" height="8" rx="3" fill="#7b83eb"/><circle cx="7" cy="3" r="2.5" fill="#5059c9"/><rect x="2" y="6" width="10" height="10" rx="1" fill="#5059c9"/><text x="7" y="14" font-size="7" fill="#fff" text-anchor="middle" font-family="Liberation Sans" font-weight="bold">T</text></svg>
<div class="a" style="left:613px;top:546.5px;width:10px;height:10px;border-radius:50%;background:#d13438;box-shadow:0 0 0 1px #f2e1d6"></div><div class="a" style="left:615.5px;top:551px;width:5px;height:1.2px;background:#fff"></div>
<div class="a" style="left:607.5px;top:570.5px;width:10.5px;height:2px;border-radius:1px;background:#2b6bd0"></div>
<svg class="a" style="left:634px;top:551px" width="17" height="17" viewBox="0 0 17 17"><circle cx="8.5" cy="8.5" r="8" fill="#db4437"/><path d="M8.5 8.5L1.6 4.5A8 8 0 0 0 4.5 15.4z" fill="#0f9d58"/><path d="M8.5 8.5L15.4 4.5A8 8 0 0 1 12.5 15.4L8.5 8.5z" fill="#f4b400"/><path d="M8.5 8.5l-4 6.9A8 8 0 0 0 12.5 15.4z" fill="#0f9d58"/><circle cx="8.5" cy="8.5" r="3.8" fill="#fff"/><circle cx="8.5" cy="8.5" r="3" fill="#4285f4"/></svg>
<div class="a" style="left:640px;top:571px;width:5px;height:1.5px;border-radius:1px;background:#888"></div>
<svg class="a" style="left:664px;top:551px" width="17" height="17" viewBox="0 0 17 17"><rect x="5" y="1" width="11" height="15" rx="1" fill="#21a366"/><rect x="5" y="6" width="11" height="5" fill="#107c41"/><rect x="1" y="4" width="9" height="9" rx="1" fill="#185c37"/><text x="5.5" y="11.3" font-size="7" fill="#fff" text-anchor="middle" font-family="Liberation Sans" font-weight="bold">X</text></svg>
<div class="a" style="left:670px;top:571px;width:5px;height:1.5px;border-radius:1px;background:#888"></div>
<svg class="a" style="left:693px;top:551px" width="17" height="17" viewBox="0 0 17 17"><rect x="5" y="1" width="11" height="15" rx="1" fill="#41a5ee"/><rect x="5" y="6" width="11" height="5" fill="#2b7cd3"/><rect x="5" y="11" width="11" height="5" fill="#185abd"/><rect x="1" y="4" width="9" height="9" rx="1" fill="#185abd"/><text x="5.5" y="11.3" font-size="7" fill="#fff" text-anchor="middle" font-family="Liberation Sans" font-weight="bold">W</text></svg>
<div class="a" style="left:699px;top:571px;width:5px;height:1.5px;border-radius:1px;background:#888"></div>
<svg class="a" style="left:722px;top:551px" width="18" height="17" viewBox="0 0 18 17"><circle cx="10" cy="8.5" r="7.5" fill="#ed6c47"/><path d="M10 1a7.5 7.5 0 0 1 7.5 7.5H10z" fill="#ff8f6b"/><rect x="1" y="4" width="9" height="9" rx="1" fill="#c43e1c"/><text x="5.5" y="11.3" font-size="7" fill="#fff" text-anchor="middle" font-family="Liberation Sans" font-weight="bold">P</text></svg>
<div class="a" style="left:728px;top:571px;width:5px;height:1.5px;border-radius:1px;background:#888"></div>
<svg class="a" style="left:789px;top:556px" width="9" height="6" viewBox="0 0 9 6" fill="none" stroke="#333" stroke-width="1.1"><path d="M1 5l3.5-3.5L8 5"/></svg>
<svg class="a" style="left:808px;top:551px" width="15" height="16" viewBox="0 0 15 16"><circle cx="9" cy="3" r="2" fill="#7b83eb"/><rect x="2" y="5" width="9" height="8" rx="1" fill="#5059c9"/><circle cx="11" cy="11" r="3.5" fill="#d13438"/><path d="M9.3 11h3.4" stroke="#fff" stroke-width="1"/></svg>
<svg class="a" style="left:830px;top:551px" width="15" height="16" viewBox="0 0 15 16"><path d="M7 1l5.5 2v4c0 4-2.5 6.5-5.5 8-3-1.5-5.5-4-5.5-8V3z" fill="#2c7ccf"/><path d="M7 1l5.5 2v4c0 4-2.5 6.5-5.5 8z" fill="#4aa0e6"/><circle cx="11" cy="12" r="3.3" fill="#2aa84a"/><path d="M9.5 12l1 1 2-2" stroke="#fff" stroke-width="0.9" fill="none"/></svg>
<div class="a" style="left:848px;top:546.5px;width:20.5px;height:27px;border-radius:3px;background:#1665c1"></div>
<svg class="a" style="left:853px;top:551px" width="11" height="17" viewBox="0 0 11 17" fill="none" stroke="#fff" stroke-width="1.3"><rect x="3.5" y="1" width="4" height="8.5" rx="2" fill="#fff"/><path d="M1.5 7.5a4 4 0 0 0 8 0M5.5 11.5v3"/></svg>
<div class="a" style="left:877px;top:555px;font-size:8px;color:#333">УКР</div>
<svg class="a" style="left:903px;top:553px" width="13" height="11" viewBox="0 0 13 11" fill="none" stroke="#333" stroke-width="1"><path d="M1 4a8 8 0 0 1 11 0M2.8 6a5.5 5.5 0 0 1 7.4 0M4.6 8a3 3 0 0 1 3.8 0"/><circle cx="6.5" cy="9.8" r="0.8" fill="#333"/></svg>
<svg class="a" style="left:918px;top:553px" width="13" height="11" viewBox="0 0 13 11" fill="none" stroke="#333" stroke-width="1"><path d="M1 3.5h2.5L6.5 1v9L3.5 7.5H1z"/><path d="M8.5 3.5a2.5 2.5 0 0 1 0 4M10 2a4.5 4.5 0 0 1 0 7"/></svg>
<svg class="a" style="left:934px;top:553px" width="13" height="11" viewBox="0 0 13 11"><rect x="1" y="3" width="10" height="6" rx="1" fill="#333"/><rect x="11" y="4.5" width="1.5" height="3" fill="#333"/><path d="M3 1l3 3" stroke="#333" stroke-width="1"/></svg>
<div class="a" style="left:976.5px;top:549.5px;font-size:8px;color:#333">12:57</div>
<div class="a" style="left:957px;top:560px;font-size:8px;color:#333">03.12.2025</div>
<svg class="a" style="left:998px;top:553px" width="12" height="12" viewBox="0 0 12 12" fill="#333"><path d="M6 1a3.5 3.5 0 0 0-3.5 3.5V8L1.5 9.5h9L9.5 8V4.5A3.5 3.5 0 0 0 6 1z"/><rect x="4.5" y="10" width="3" height="1.5" rx="0.7"/></svg>

</body></html>
